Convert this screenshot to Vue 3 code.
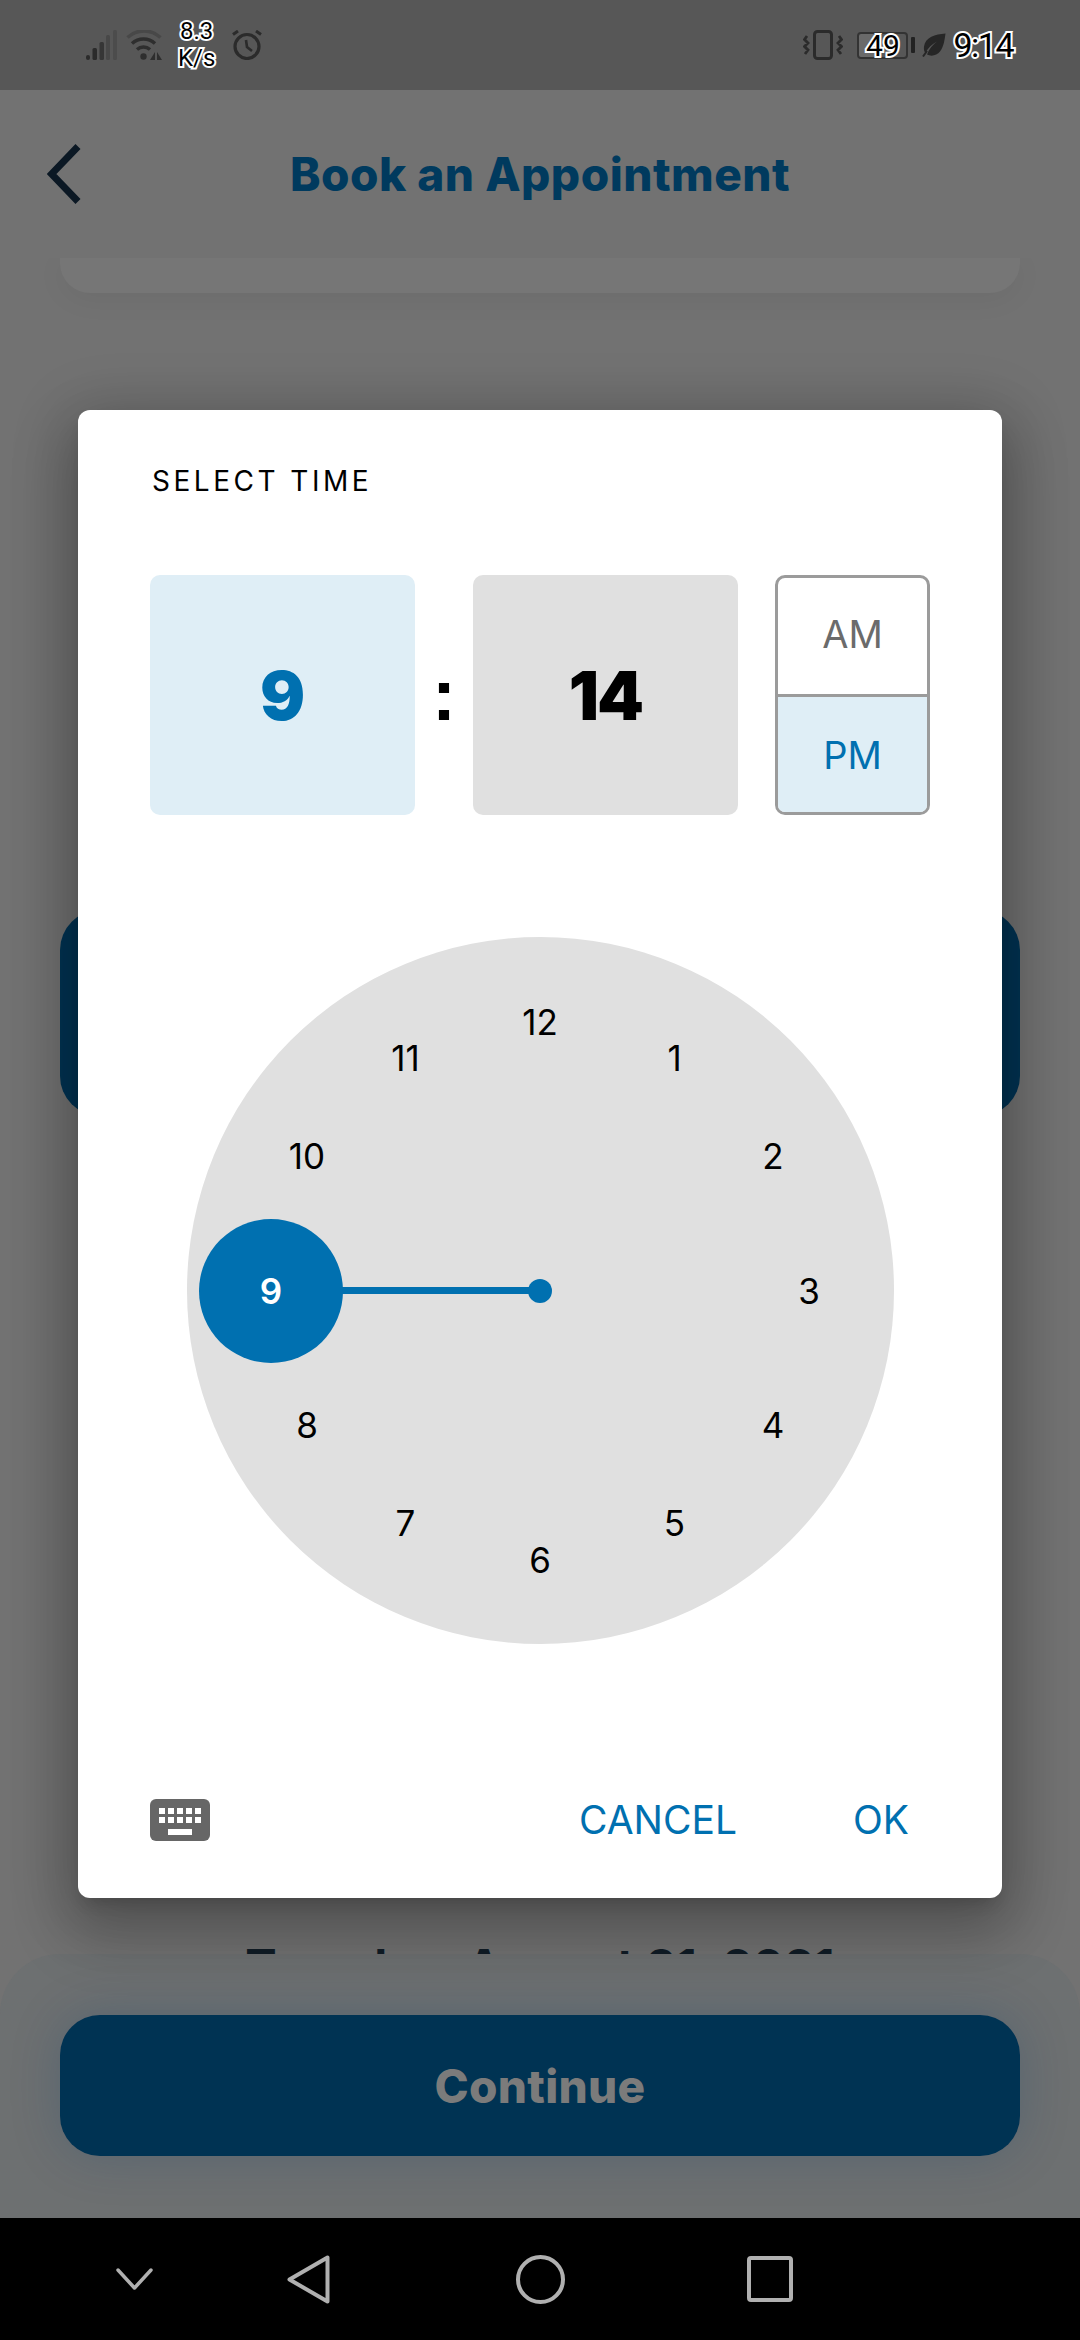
<script setup>
import { computed } from 'vue'

const selectedHour = 9
const hours = computed(() =>
  [12, 1, 2, 3, 4, 5, 6, 7, 8, 9, 10, 11].map((h, i) => {
    const a = (i * 30 * Math.PI) / 180
    return {
      h,
      left: 353.5 + 269 * Math.sin(a) + 'px',
      top: 353.5 - 269 * Math.cos(a) + 'px'
    }
  })
)
</script>

<template>
  <div class="page">
    <div class="status">
      <div class="status-left">
        <svg class="sig" width="31" height="30" viewBox="0 0 31 30">
          <rect x="0" y="25" width="4" height="5" rx="2" fill="#2b2b2b" />
          <rect x="6.5" y="18" width="4.5" height="12" rx="1.5" fill="#2b2b2b" />
          <rect x="13.5" y="12" width="4.5" height="18" rx="1.5" fill="#363636" />
          <rect x="20" y="5" width="4" height="25" rx="1.5" fill="#484848" />
          <rect x="27" y="0" width="4" height="30" rx="1.5" fill="#4c4c4c" />
        </svg>
        <svg class="wifi" width="36" height="30" viewBox="0 0 36 30" fill="none">
          <path d="M1.5 7.5A24 24 0 0 1 34.5 7.5" stroke="#484848" stroke-width="3.5" />
          <path d="M6 13.5A17 17 0 0 1 29 13.5" stroke="#2e2e2e" stroke-width="3.5" />
          <path d="M11 19.5A10 10 0 0 1 24 19.5" stroke="#2e2e2e" stroke-width="3.5" />
          <circle cx="17.5" cy="26.5" r="3.2" fill="#2e2e2e" />
          <path d="M29 22v8h-5zM31 22v8h5z" fill="#2e2e2e" />
        </svg>
        <div class="speed"><span>8.3</span><span>K/s</span></div>
        <svg class="alarm" width="30" height="30" viewBox="0 0 30 30" fill="none" stroke="#2b2b2b">
          <circle cx="15" cy="16.5" r="12" stroke-width="3.2" />
          <path d="M14 10l1 7 5 4" stroke-width="2.6" />
          <path d="M1 4.5L6 1M29 4.5L24 1" stroke-width="3" />
        </svg>
      </div>
      <div class="status-right">
        <svg width="40" height="30" viewBox="0 0 40 30" fill="none" stroke="#2b2b2b">
          <rect x="11.5" y="1.5" width="17" height="27" rx="3" stroke-width="3" />
          <path d="M4 6L1.5 9.5 5 13 1.5 16.5 5 20 2 24M36 6l2.5 3.5L35 13l3.5 3.5L35 20l3 4" stroke-width="2.8" />
        </svg>
        <div class="battery"><span>49</span></div>
        <div class="battery-tip"></div>
        <svg class="leaf" width="24" height="24" viewBox="0 0 24 24">
          <path d="M23.5.5C13 1.5 3.5 4 2 13.5c-.4 2.7.2 5 1.3 6.5C6 15 10 11 15 8.5 11 11.5 7 16 5 21.5c4 2.2 10 1.2 13-3C22 13 22.5 7 23.5.5z" fill="#262626" />
          <path d="M1 23.5L5 18" stroke="#262626" stroke-width="2" />
        </svg>
        <div class="clock-text">9:14</div>
      </div>
    </div>

    <header class="topbar">
      <svg class="back" width="34" height="60" viewBox="0 0 34 60" fill="none">
        <path d="M31 2.5L4.5 30 31 57.5" stroke="#0b1824" stroke-width="7" />
      </svg>
      <h1>Book an Appointment</h1>
    </header>

    <main class="content">
      <div class="card-end"></div>
      <div class="blue-bar"></div>
      <div class="date">Tuesday, August 31, 2021</div>
    </main>

    <div class="sheet">
      <button class="continue">Continue</button>
    </div>

    <nav class="navbar">
      <svg class="nav-down" width="37" height="22" viewBox="0 0 37 22" fill="none">
        <path d="M2 2l16.5 18L35 2" stroke="#b0b0b0" stroke-width="3.5" stroke-linejoin="round" stroke-linecap="round" />
      </svg>
      <svg class="nav-back" width="43" height="49" viewBox="0 0 43 49" fill="none">
        <path d="M40.5 2.5v44L2.5 24.5z" stroke="#b0b0b0" stroke-width="4" stroke-linejoin="round" />
      </svg>
      <svg class="nav-home" width="49" height="49" viewBox="0 0 49 49" fill="none">
        <circle cx="24.5" cy="24.5" r="22.5" stroke="#b0b0b0" stroke-width="4" />
      </svg>
      <svg class="nav-recent" width="46" height="46" viewBox="0 0 46 46" fill="none">
        <rect x="2" y="2" width="42" height="42" rx="2" stroke="#b0b0b0" stroke-width="4" />
      </svg>
    </nav>

    <section class="dialog">
      <div class="dialog-title">SELECT TIME</div>
      <div class="time-row">
        <div class="box hour">9</div>
        <div class="colon">:</div>
        <div class="box minute">14</div>
        <div class="period">
          <div class="am">AM</div>
          <div class="pm">PM</div>
        </div>
      </div>

      <div class="dial">
        <div class="hand"></div>
        <div class="pivot"></div>
        <div
          v-for="item in hours"
          :key="item.h"
          class="num"
          :class="{ selected: item.h === selectedHour }"
          :style="{ left: item.left, top: item.top }"
        >{{ item.h }}</div>
      </div>

      <div class="actions">
        <svg width="60" height="42" viewBox="0 0 60 42">
          <rect width="60" height="42" rx="6" fill="#666" />
          <g fill="#fff">
            <rect x="9" y="9" width="6" height="6" /><rect x="18" y="9" width="6" height="6" /><rect x="27" y="9" width="6" height="6" /><rect x="36" y="9" width="6" height="6" /><rect x="45" y="9" width="6" height="6" />
            <rect x="9" y="18" width="6" height="6" /><rect x="18" y="18" width="6" height="6" /><rect x="27" y="18" width="6" height="6" /><rect x="36" y="18" width="6" height="6" /><rect x="45" y="18" width="6" height="6" />
            <rect x="18" y="30" width="24" height="6" />
          </g>
        </svg>
        <div class="action-btns">
          <span>CANCEL</span>
          <span>OK</span>
        </div>
      </div>
    </section>
  </div>
</template>

<style>
html, body {
  margin: 0;
  background: #707070;
}
</style>

<style scoped>
.page {
  position: relative;
  width: 1080px;
  height: 2340px;
  overflow: hidden;
  display: flex;
  flex-direction: column;
  background: #727272;
  font-family: Inter, "Liberation Sans", sans-serif;
}

.status {
  height: 90px;
  flex: none;
  background: #575757;
  display: flex;
  align-items: center;
  justify-content: space-between;
  padding: 0 67px 0 86px;
  font-family: Roboto, sans-serif;
  color: #000;
  z-index: 2;
}

.status-left,
.status-right {
  display: flex;
  align-items: center;
}

.wifi {
  margin-left: 9px;
}

.speed {
  margin-left: 16px;
  display: flex;
  flex-direction: column;
  align-items: center;
  font-size: 24px;
  line-height: 27px;
  -webkit-text-stroke: 4px #fff;
  paint-order: stroke fill;
}

.alarm {
  margin-left: 17px;
}

.battery {
  margin-left: 14px;
  width: 51px;
  height: 27px;
  box-sizing: border-box;
  border: 2px solid #333;
  border-radius: 4px;
  background: linear-gradient(90deg, #6a6a6a 50%, transparent 50%);
  display: flex;
  align-items: center;
  justify-content: center;
  font-size: 30px;
  -webkit-text-stroke: 4px #fff;
  paint-order: stroke fill;
}

.battery-tip {
  width: 4px;
  height: 16px;
  margin-left: 3px;
  background: #222;
  border-radius: 1px;
}

.leaf {
  margin-left: 7px;
}

.clock-text {
  margin-left: 7px;
  font-size: 34px;
  line-height: 40px;
  letter-spacing: -1.5px;
  -webkit-text-stroke: 4px #fff;
  paint-order: stroke fill;
}

.topbar {
  height: 168px;
  flex: none;
  position: relative;
  z-index: 1;
  display: flex;
  align-items: center;
  justify-content: center;
}

.back {
  position: absolute;
  left: 47px;
  top: 54px;
}

h1 {
  margin: 0;
  font-size: 46px;
  font-weight: 800;
  color: #003a5e;
  letter-spacing: 0.5px;
}

.content {
  flex: 1;
  overflow: hidden;
  padding: 0 60px;
  display: flex;
  flex-direction: column;
}

.card-end {
  height: 35px;
  flex: none;
  background: #767676;
  border-radius: 0 0 30px 30px;
  box-shadow: 0 6px 30px rgba(0, 0, 0, 0.05);
}

.blue-bar {
  height: 206px;
  flex: none;
  margin-top: 617px;
  background: #003353;
  border-radius: 40px;
}

.date {
  margin-top: 820px;
  line-height: 60px;
  font-size: 47px;
  font-weight: 700;
  letter-spacing: 0.2px;
  color: #101c26;
  text-align: center;
  white-space: nowrap;
}

.sheet {
  height: 264px;
  flex: none;
  box-sizing: border-box;
  padding: 61px 60px 0;
  background: #6d7071;
  border-radius: 60px 60px 0 0;
  position: relative;
}

.continue {
  display: block;
  width: 100%;
  height: 141px;
  border: none;
  border-radius: 40px;
  background: #003353;
  color: #7b7b7b;
  font-family: Inter, sans-serif;
  font-size: 46px;
  font-weight: 800;
  letter-spacing: 0.3px;
  box-shadow: 0 0 50px rgba(0, 60, 110, 0.22);
}

.navbar {
  height: 122px;
  flex: none;
  background: #000;
  display: flex;
  align-items: center;
  padding-left: 116px;
  position: relative;
  z-index: 1;
}

.nav-down {
  margin-top: -1px;
}

.nav-back {
  margin-left: 134px;
}

.nav-home {
  margin-left: 186px;
}

.nav-recent {
  margin-left: 182px;
}

.dialog {
  position: absolute;
  left: 78px;
  top: 410px;
  width: 924px;
  height: 1488px;
  box-sizing: border-box;
  padding: 0 72px;
  background: #fff;
  border-radius: 12px;
  box-shadow: 0 11px 15px -7px rgba(0, 0, 0, 0.16), 0 30px 60px 10px rgba(0, 0, 0, 0.2), 0 9px 60px 12px rgba(0, 0, 0, 0.14);
  display: flex;
  flex-direction: column;
  z-index: 1;
}

.dialog-title {
  height: 165px;
  box-sizing: border-box;
  padding: 51px 0 0 2px;
  font-size: 28px;
  line-height: 40px;
  letter-spacing: 3.5px;
  color: #000;
}

.time-row {
  display: flex;
  height: 240px;
  flex: none;
}

.box {
  width: 265px;
  border-radius: 10px;
  display: flex;
  align-items: center;
  justify-content: center;
  font-size: 67px;
  font-weight: 900;
}

.hour {
  background: #dfeef6;
  color: #0070b0;
}

.minute {
  background: #e0e0e0;
  color: #000;
  letter-spacing: -2px;
}

.colon {
  width: 58px;
  display: flex;
  align-items: center;
  justify-content: center;
  font-family: "Liberation Sans", sans-serif;
  font-size: 72px;
  font-weight: 700;
  color: #000;
}

.period {
  width: 155px;
  margin-left: 37px;
  box-sizing: border-box;
  border: 3px solid #9b9b9b;
  border-radius: 10px;
  overflow: hidden;
  display: flex;
  flex-direction: column;
  font-size: 38px;
}

.am,
.pm {
  display: flex;
  align-items: center;
  justify-content: center;
}

.am {
  flex: none;
  height: 119px;
  box-sizing: border-box;
  padding-bottom: 4px;
  color: #6b6b6b;
  border-bottom: 3px solid #9b9b9b;
}

.pm {
  flex: 1;
  background: #dfeef6;
  color: #0070b0;
}

.dial {
  position: relative;
  width: 707px;
  height: 707px;
  flex: none;
  margin: 122px auto 0;
  background: #e0e0e0;
  border-radius: 50%;
}

.hand {
  position: absolute;
  left: 155px;
  top: 350px;
  width: 198px;
  height: 7px;
  background: #0070b0;
}

.pivot {
  position: absolute;
  left: 341.5px;
  top: 341.5px;
  width: 24px;
  height: 24px;
  border-radius: 50%;
  background: #0070b0;
}

.num {
  position: absolute;
  transform: translate(-50%, -50%);
  font-size: 35px;
  line-height: 40px;
  color: #000;
}

.num.selected {
  width: 144px;
  height: 144px;
  border-radius: 50%;
  background: #0070b0;
  color: #fff;
  font-weight: 600;
  display: flex;
  align-items: center;
  justify-content: center;
}

.actions {
  margin-top: auto;
  padding-bottom: 57px;
  display: flex;
  align-items: center;
  justify-content: space-between;
}

.action-btns {
  display: flex;
  gap: 116px;
  padding-right: 21px;
  font-size: 39px;
  line-height: 42px;
  color: #0070b0;
}
</style>
